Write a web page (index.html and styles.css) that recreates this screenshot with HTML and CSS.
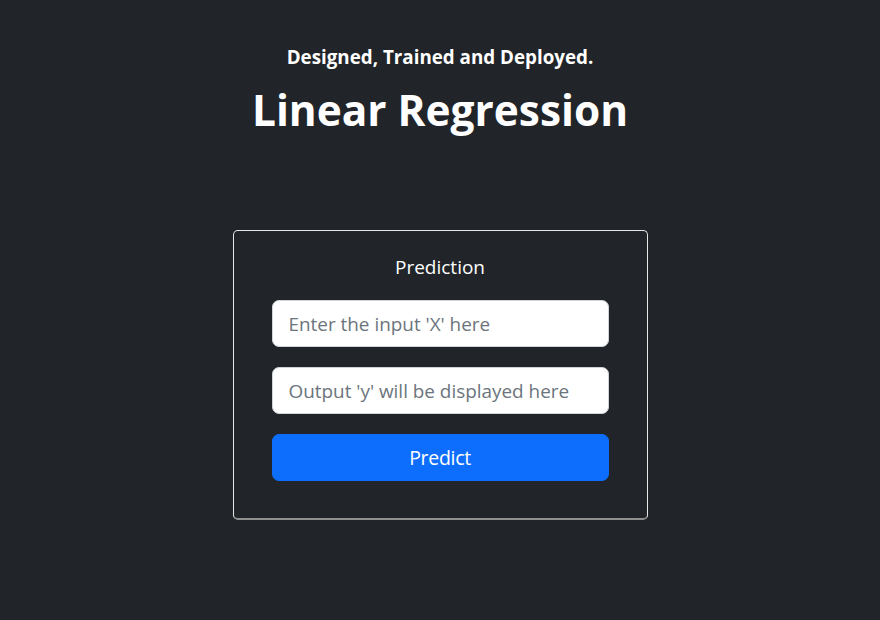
FILE: index.html
```html
<!DOCTYPE html>
<html lang="en">
<head>
<meta charset="utf-8">
<title>Linear Regression</title>
<link rel="stylesheet" href="styles.css">
</head>
<body>
<main class="page">
  <header class="hero">
    <h5 class="tagline">Designed, Trained and Deployed.</h5>
    <h1 class="title">Linear Regression</h1>
  </header>
  <section class="card">
    <h2 class="card-title">Prediction</h2>
    <form class="form">
      <input class="field" type="text" placeholder="Enter the input 'X' here">
      <input class="field" type="text" placeholder="Output 'y' will be displayed here" readonly>
      <button class="btn" type="button">Predict</button>
    </form>
  </section>
</main>
</body>
</html>
```

FILE: styles.css
```css
* { box-sizing: border-box; }
html, body {
  margin: 0;
  padding: 0;
  height: 100%;
}
body {
  background: #212529;
  color: #ffffff;
  font-family: "Open Sans", "Noto Sans", sans-serif;
}
.page {
  display: flex;
  flex-direction: column;
  align-items: center;
  padding-top: 44px;
}
.hero {
  display: flex;
  flex-direction: column;
  align-items: center;
}
.tagline {
  margin: 0;
  font-size: 18.8px;
  font-weight: 700;
  line-height: 26px;
}
.title {
  margin: 14px 0 0;
  font-size: 42.4px;
  font-weight: 700;
  line-height: 52px;
}
.card {
  margin-top: 94px;
  width: 415px;
  height: 290px;
  border: 1px solid #e6e6e6;
  border-bottom: 2px solid #8f8f8f;
  border-radius: 5px;
  padding: 24px 38px 0;
  display: flex;
  flex-direction: column;
  align-items: center;
}
.card-title {
  margin: 0;
  font-size: 19px;
  font-weight: 400;
  line-height: 24px;
}
.form {
  margin-top: 21px;
  width: 337px;
  display: flex;
  flex-direction: column;
  gap: 20px;
}
.field {
  height: 47px;
  width: 100%;
  border: 1px solid #ced4da;
  border-radius: 7px;
  background: #ffffff;
  padding: 0 16px;
  font-family: inherit;
  font-size: 18.9px;
  color: #212529;
  outline: none;
}
.field::placeholder {
  color: #6c757d;
}
.btn {
  height: 47px;
  width: 100%;
  border: 1px solid #0d6efd;
  border-radius: 7px;
  background: #0d6efd;
  color: #ffffff;
  font-family: inherit;
  font-size: 19.5px;
  letter-spacing: -0.3px;
  cursor: pointer;
}
```
